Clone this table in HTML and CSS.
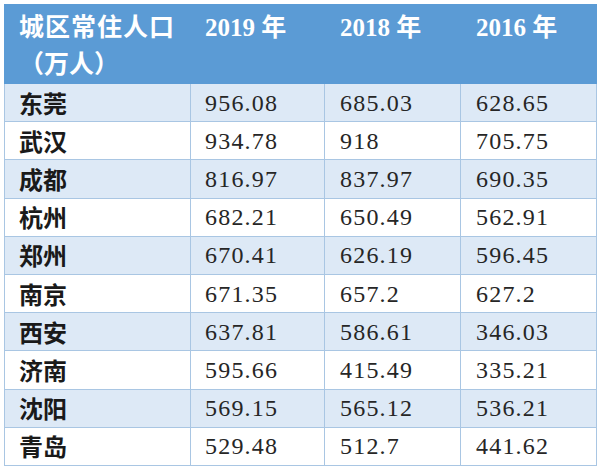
FILE: index.html
```html
<!DOCTYPE html>
<html lang="zh">
<head>
<meta charset="utf-8">
<link rel="stylesheet" href="styles.css">
</head>
<body>
<table class="pop">
  <colgroup>
    <col class="c-city"><col class="c-num"><col class="c-num2"><col class="c-num2">
  </colgroup>
  <thead>
    <tr class="head">
      <th>城区常住人口<br><span class="paren">（万人）</span></th>
      <th>2019 年</th>
      <th>2018 年</th>
      <th>2016 年</th>
    </tr>
  </thead>
  <tbody>
    <tr class="alt"><td class="city">东莞</td><td class="num">956.08</td><td class="num">685.03</td><td class="num">628.65</td></tr>
    <tr><td class="city">武汉</td><td class="num">934.78</td><td class="num">918</td><td class="num">705.75</td></tr>
    <tr class="alt"><td class="city">成都</td><td class="num">816.97</td><td class="num">837.97</td><td class="num">690.35</td></tr>
    <tr><td class="city">杭州</td><td class="num">682.21</td><td class="num">650.49</td><td class="num">562.91</td></tr>
    <tr class="alt"><td class="city">郑州</td><td class="num">670.41</td><td class="num">626.19</td><td class="num">596.45</td></tr>
    <tr><td class="city">南京</td><td class="num">671.35</td><td class="num">657.2</td><td class="num">627.2</td></tr>
    <tr class="alt"><td class="city">西安</td><td class="num">637.81</td><td class="num">586.61</td><td class="num">346.03</td></tr>
    <tr><td class="city">济南</td><td class="num">595.66</td><td class="num">415.49</td><td class="num">335.21</td></tr>
    <tr class="alt"><td class="city">沈阳</td><td class="num">569.15</td><td class="num">565.12</td><td class="num">536.21</td></tr>
    <tr><td class="city">青岛</td><td class="num">529.48</td><td class="num">512.7</td><td class="num">441.62</td></tr>
  </tbody>
</table>
</body>
</html>
```
FILE: styles.css
```css
html, body {
  margin: 0;
  padding: 0;
  background: #ffffff;
}
body {
  padding: 4px 0 0 4px;
}
.pop {
  border-collapse: collapse;
  table-layout: fixed;
  width: 592px;
  font-family: "Liberation Serif", "Noto Sans CJK SC", serif;
  color: #1c1c1c;
}
.c-city { width: 186px; }
.c-num { width: 134px; }
.c-num2 { width: 136px; }

.head th {
  background: #5b9bd5;
  color: #ffffff;
  font-weight: 700;
  font-size: 25px;
  letter-spacing: 1px;
  line-height: 37px;
  text-align: left;
  vertical-align: top;
  padding: 4px 0 0 14px;
  height: 73px;
  border: 1px solid #5b9bd5;
  white-space: nowrap;
}
.head th + th {
  padding-left: 14px;
  letter-spacing: 0;
}
.head th:nth-child(3), .head th:nth-child(4) {
  padding-left: 15px;
}
.paren {
  letter-spacing: 0;
}
tbody tr {
  height: 38.2px;
}
tbody td {
  border: 1px solid #a9c6e3;
  padding: 0 0 0 14px;
  vertical-align: middle;
  white-space: nowrap;
}
tbody td:nth-child(3), tbody td:nth-child(4) {
  padding-left: 15px;
}
tbody tr.alt td {
  background: #dde9f6;
}
.city {
  font-family: "Noto Sans CJK SC", sans-serif;
  font-weight: 700;
  font-size: 24px;
  line-height: 30px;
  color: #1a1a1a;
}
.num {
  font-size: 24px;
  letter-spacing: 1.2px;
  line-height: 30px;
  color: #262626;
}
```
